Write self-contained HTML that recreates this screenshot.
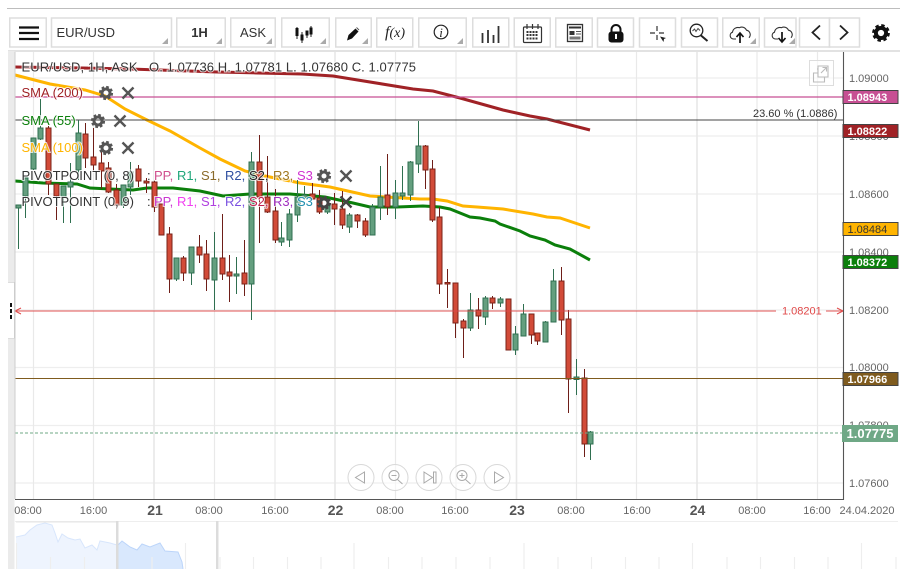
<!DOCTYPE html>
<html><head><meta charset="utf-8"><title>EUR/USD</title>
<style>
html,body{margin:0;padding:0;background:#fff;width:905px;height:569px;overflow:hidden}
svg{display:block;filter:blur(.35px)}
text{font-family:"Liberation Sans",sans-serif}
.ax{font-size:11px;fill:#666}
.d{font-size:14px;font-weight:bold;fill:#555;text-anchor:middle}
.t{font-size:11px;fill:#666;text-anchor:middle}
.l{font-size:13px;paint-order:stroke;stroke:#fff;stroke-width:2px;stroke-opacity:.75}
.v{font-size:11px;font-weight:bold;fill:#fff}
.b{fill:#fff;stroke:#ddd;stroke-width:1.5}
.c{fill:#aaa}
</style></head><body>
<svg xmlns="http://www.w3.org/2000/svg" width="905" height="569" viewBox="0 0 905 569">
<defs>
<g id="gear"><circle r="4" fill="none" stroke="currentColor" stroke-width="3"/><circle r="6" fill="none" stroke="currentColor" stroke-width="2.2" stroke-dasharray="2.7 2.01"/></g>
<g id="xx"><path d="M-5.5-5.5L5.5 5.5M5.5-5.5L-5.5 5.5" stroke="currentColor" stroke-width="2.4" fill="none"/></g>
</defs>

<!-- top rule -->
<rect x="7" y="8" width="893" height="1" fill="#bdbdbd"/>

<!-- toolbar buttons -->
<rect class="b" x="9.75" y="18" width="36.5" height="29"/>
<rect class="b" x="51.5" y="18" width="120" height="29"/>
<rect class="b" x="176.75" y="18" width="48.5" height="29"/>
<rect class="b" x="230.75" y="18" width="44.5" height="29"/>
<rect class="b" x="281.75" y="18" width="47.5" height="29"/>
<rect class="b" x="335.75" y="18" width="35.5" height="29"/>
<rect class="b" x="376.75" y="18" width="36" height="29"/>
<rect class="b" x="418.75" y="18" width="47.5" height="29"/>
<rect class="b" x="472.75" y="18" width="36" height="29"/>
<rect class="b" x="514.25" y="18" width="36" height="29"/>
<rect class="b" x="555.75" y="18" width="36.5" height="29"/>
<rect class="b" x="597.5" y="18" width="36" height="29"/>
<rect class="b" x="639.5" y="18" width="36" height="29"/>
<rect class="b" x="681.5" y="18" width="36" height="29"/>
<rect class="b" x="722.75" y="18" width="36.5" height="29"/>
<rect class="b" x="764.5" y="18" width="31.5" height="29"/>
<rect class="b" x="799.5" y="18" width="30" height="29"/>
<rect class="b" x="829.5" y="18" width="30" height="29"/>

<!-- corner triangles -->
<path class="c" d="M168 38v6h-6zM222 38v6h-6zM272 38v6h-6zM326 38v6h-6zM368 38v6h-6zM463 38v6h-6zM756 38v6h-6zM795 38v6h-6z"/>

<!-- toolbar icons -->
<path d="M19 27.5h20M19 33h20M19 39h20" stroke="#111" stroke-width="2.2" fill="none"/>
<text x="56.5" y="37" font-size="13" fill="#333">EUR/USD</text>
<text x="199.5" y="37" font-size="13" font-weight="bold" fill="#333" text-anchor="middle">1H</text>
<text x="253" y="37" font-size="13" fill="#333" text-anchor="middle">ASK</text>
<path d="M297 27v12M302 32v11M307 31v7M311 26v11" stroke="#222" stroke-width="1" fill="none"/>
<path d="M296 28.5h2v7h-2zM301 35h2v5h-2zM306 31h2v4h-2zM310 28h2v6h-2z" fill="#111" stroke="#111"/>
<path d="M347 40.500l1.500-5.500 7-6.500 3 3-6.500 7z" fill="#111"/><path d="M356.500 27.500l2.500 2.500" stroke="#555" stroke-width="1"/>
<text x="395" y="37" font-size="14" fill="#222" text-anchor="middle" style="font-family:'Liberation Serif',serif;font-style:italic"><tspan font-size="16">f</tspan>(x)</text>
<circle cx="441" cy="32" r="6.8" fill="none" stroke="#222" stroke-width="1.2"/>
<text x="441" y="37" font-size="13" fill="#222" text-anchor="middle" style="font-family:'Liberation Serif',serif;font-style:italic">i</text>
<path d="M482.5 33v10M488 30v13M493.5 35v8M498.5 26v17" stroke="#333" stroke-width="1.8" fill="none"/>
<rect x="523.5" y="27" width="18" height="15.5" rx="1" fill="none" stroke="#333" stroke-width="1.2"/>
<path d="M527 24v5M532.5 24v5M538 24v5" stroke="#333" stroke-width="1.2"/>
<path d="M526.5 32h12M526.5 35h12M526.5 38.5h12" stroke="#333" stroke-width="2" stroke-dasharray="2 1" fill="none"/>
<rect x="567.5" y="24.5" width="15" height="17" fill="none" stroke="#333" stroke-width="1.3"/>
<path d="M569 27.5h12" stroke="#333" stroke-width="2"/>
<rect x="569.5" y="31" width="5" height="4" fill="#333"/><rect x="569.5" y="36.5" width="11" height="3" fill="#777"/><path d="M576 31.5h5M576 34h5" stroke="#555"/>
<path d="M611.5 32v-2.5a4.5 4.5 0 0 1 9 0V32" fill="none" stroke="#111" stroke-width="2"/>
<rect x="608.5" y="31.5" width="15" height="11" rx="3" fill="#111"/><rect x="615" y="34" width="2" height="5" fill="#fff"/>
<path d="M650 33h5M659 33h5M657 26v5M657 35v5" stroke="#333" stroke-width="1.2"/>
<path d="M660 36.5l6 1.5-2 1 -.5 3z" fill="#222"/>
<circle cx="696.5" cy="30.5" r="6.3" fill="none" stroke="#222" stroke-width="1.3"/>
<path d="M701 35.5l6.5 5.5" stroke="#222" stroke-width="2"/>
<path d="M692.5 31l2-2 1.5 2.5 2-3 2 2" fill="none" stroke="#444"/>
<path d="M736 39h-2.5a3.5 3.5 0 0 1-1-6.8 5.5 5.5 0 0 1 7-4.5 5 5 0 0 1 7 2.5 4.5 4.5 0 0 1 2.5 7.5" fill="none" stroke="#333" stroke-width="1.1"/>
<path d="M740 43v-9M736.5 37l3.5-4 3.5 4" fill="none" stroke="#111" stroke-width="1.7"/>
<path d="M778 39h-2.5a3.5 3.5 0 0 1-1-6.8 5.5 5.5 0 0 1 7-4.5 5 5 0 0 1 7 2.5 4.5 4.5 0 0 1 2.5 7.5" fill="none" stroke="#333" stroke-width="1.1"/>
<path d="M782 32v9M778.5 38l3.5 4 3.5-4" fill="none" stroke="#111" stroke-width="1.7"/>
<path d="M820 25.5l-7.5 7 7.5 7" fill="none" stroke="#222" stroke-width="1.8"/>
<path d="M840 25.5l7.5 7-7.5 7" fill="none" stroke="#222" stroke-width="1.8"/>
<g transform="translate(881 33) scale(1.25)" style="color:#111"><use href="#gear"/><circle r="4.500" fill="none" stroke="#111" stroke-width="2.200"/></g>

<!-- chart frame / left strip -->
<rect x="8" y="50" width="892" height="2" fill="#e2e2e2"/>
<rect x="8" y="51" width="6.5" height="231" fill="#ebebeb"/>
<rect x="8" y="282" width="7" height="56" fill="#fff"/>
<rect x="8" y="282" width="7" height="1" fill="#ddd"/><rect x="8" y="338" width="7" height="1" fill="#ddd"/>
<rect x="14" y="282" width="1" height="56" fill="#ccc"/>
<rect x="8" y="339" width="6.5" height="230" fill="#ebebeb"/>
<path d="M11 303v4M11 309v4M11 315v4" stroke="#111" stroke-width="2"/>

<!-- grid -->
<path d="M15 78h828M15 136h828M15 194h828M15 252h828M15 310h828M15 367.5h828M15 425.5h828M15 483h828" stroke="#eee" stroke-width="1.3"/>
<path d="M33.5 52v447M93.5 52v447M214.5 52v447M275 52v447M395.5 52v447M456 52v447M576.5 52v447M636.5 52v447M757 52v447M817.5 52v447" stroke="#e9e9e9" stroke-width="1.2"/>
<path d="M154 52v447M335 52v447M516.5 52v447M697 52v447" stroke="#e8e8e8" stroke-width="1.6"/>

<!-- SMAs -->
<path d="M15 75L50 84 85 90 105 96 125 109 147 120 170 131 200 148 220 159 245 171 265 176 300 183 330 187 370 196 420 199 433 199 447 201 463 206 477 207 503 209 533 214 547 217 560 218 590 228" fill="none" stroke="#ffb400" stroke-width="3"/>
<path d="M15 181L43 183 77 184 90 188 110 189 133 190 147 188 173 188 200 191 223 196 250 194 290 194 325 197 353 203 370 207 397 207 423 206 440 207 450 209 465 215 470 217 480 218 495 221 500 224 520 231 530 236 545 240 555 245 570 249 590 260" fill="none" stroke="#0b7f0b" stroke-width="3"/>
<path d="M15 67L83 68 130 69 217 72 302 74 333 76 413 89 433 91 460 98 503 110 530 116 547 119 590 130" fill="none" stroke="#a02226" stroke-width="3"/>

<!-- h lines -->
<path d="M15 97h828" stroke="#c74f93" stroke-width="1.2"/>
<path d="M15 120h828" stroke="#444" stroke-width="1"/>

<!-- green wicks -->
<path fill="none" stroke="#2f6f50" stroke-width="1" d="M18.5 205V249M25.5 178V218M33.5 138V170M40.5 99V140M63.5 186V223M70.5 163V223M78.5 120V180M123.5 185V208M130.5 162V195M176.5 258V281M191.5 247V285M214.5 232V310M236.5 257V294M251.5 152V320M281.5 222V246M289.5 209V247M297.5 180V222M304.5 186V200M327.5 200V214M349.5 213V233M372.5 204V235M380.5 166V220M395.5 180V219M402.5 166V200M410.5 161V201M418.5 121V173M470.5 293V331M485.5 296V325M500.5 297V307M515.5 326V355M523.5 304V336M545.5 321V342M553.5 269V322M576.5 359V395M590.5 431V460"/>
<!-- red wicks -->
<path fill="none" stroke="#6e1e18" stroke-width="1" d="M48.5 126V195M56.5 184V220M85.5 123V168M93.5 128V172M101.5 145V189M108.5 162V193M116.5 184V209M138.5 165V187M146.5 178V193M154.5 180V212M161.5 204V235M169.5 227V293M183.5 256V281M199.5 235V263M206.5 240V291M222.5 214V280M229.5 255V302M244.5 240V296M259.5 135V243M267.5 156V213M275.5 189V243M312.5 183V200M319.5 190V214M334.5 193V225M342.5 191V229M357.5 214V228M365.5 218V237M387.5 154V215M425.5 145V189M432.5 160V222M439.5 207V294M447.5 269V308M455.5 283V338M463.5 319V358M478.5 298V329M492.5 296V309M508.5 299V350M531.5 314V344M537.5 333V345M561.5 267V335M568.5 310V413M584.5 369V457"/>
<!-- green bodies -->
<path fill="#649f7f" stroke="#2f6f50" stroke-width="1" d="M16 205h5v3h-5zM23 178h5v18h-5zM31 138h5v31h-5zM38 128h5v11h-5zM61 186h5v11h-5zM68 182h5v5h-5zM76 133h5v37h-5zM121 185h5v20h-5zM128 172h5v15h-5zM174 258h5v21h-5zM189 247h5v26h-5zM212 258h5v22h-5zM234 274h5v2h-5zM249 162h5v122h-5zM279 238h5v4h-5zM287 214h5v26h-5zM295 197h5v18h-5zM302 195h5v3h-5zM325 206h5v6h-5zM347 215h5v12h-5zM370 207h5v28h-5zM378 197h5v10h-5zM393 193h5v14h-5zM400 193h5v3h-5zM408 162h5v33h-5zM416 146h5v18h-5zM468 310h5v18h-5zM483 298h5v19h-5zM498 299h5v4h-5zM513 334h5v16h-5zM521 314h5v22h-5zM543 322h5v20h-5zM551 281h5v41h-5zM574 377h5v2.500h-5zM588 432h5v12h-5z"/>
<!-- red bodies -->
<path fill="#d24b38" stroke="#7a2319" stroke-width="1" d="M46 128h5v56h-5zM54 184h5v12h-5zM83 134h5v24h-5zM91 157h5v8h-5zM99 163h5v8h-5zM106 168h5v24h-5zM114 190h5v15h-5zM136 169h5v12h-5zM144 181h5v2h-5zM152 182h5v25h-5zM159 204h5v31h-5zM167 234h5v45h-5zM181 258h5v15h-5zM197 247h5v8h-5zM204 254h5v25h-5zM220 258h5v16h-5zM227 272h5v4h-5zM242 273h5v11h-5zM257 162h5v35h-5zM265 197h5v15h-5zM273 211h5v29h-5zM310 194h5v5h-5zM317 198h5v14h-5zM332 204h5v5h-5zM340 209h5v16h-5zM355 215h5v6h-5zM363 221h5v14h-5zM385 195h5v12h-5zM423 146h5v24h-5zM430 169h5v51h-5zM437 217h5v67h-5zM445 282.500h5v1.500h-5zM453 283h5v40h-5zM461 321h5v7h-5zM476 310h5v6h-5zM490 298h5v5h-5zM506 299h5v51h-5zM529 314h5v21h-5zM535 333h5v8h-5zM559 281h5v39h-5zM566 319h5v60h-5zM582 378h5v66h-5z"/>

<!-- lines on top of candles -->
<path d="M15 311h761M826 311h17" stroke="#e04848" stroke-width="1.2" opacity=".75"/>
<path d="M21 308l-6 3 6 3M837 308l6 3-6 3" fill="none" stroke="#e04848" stroke-width="1"/>
<path d="M15 378.500h828" stroke="#7f5b1e" stroke-width="1.1"/>
<path d="M15 433h828" stroke="#6fa886" stroke-width="1" stroke-dasharray="3 2"/>

<!-- axis -->
<path d="M843.500 52V499.500H15" fill="none" stroke="#555" stroke-width="1.1"/>
<path d="M15 52v447" stroke="#ccc" stroke-width="1"/>

<!-- price labels -->
<text class="ax" x="849" y="82">1.09000</text>
<text class="ax" x="849" y="140">1.08800</text>
<text class="ax" x="849" y="198">1.08600</text>
<text class="ax" x="849" y="256">1.08400</text>
<text class="ax" x="849" y="314">1.08200</text>
<text class="ax" x="849" y="371">1.08000</text>
<text class="ax" x="849" y="429">1.07800</text>
<text class="ax" x="849" y="487">1.07600</text>

<rect x="843" y="90.500" width="55" height="13" fill="#c74f93" stroke="#444"/><text class="v" x="847.500" y="101">1.08943</text>
<rect x="843" y="124.500" width="55" height="13" fill="#a02226" stroke="#444"/><text class="v" x="847.500" y="135">1.08822</text>
<rect x="843" y="222.500" width="55" height="13" fill="#ffb400" stroke="#444"/><text x="847.500" y="233" font-size="11" fill="#333">1.08484</text>
<rect x="843" y="255.500" width="55" height="13" fill="#0b7f0b" stroke="#444"/><text class="v" x="847.500" y="266">1.08372</text>
<rect x="843" y="372.500" width="55" height="13" fill="#7f5b1e" stroke="#444"/><text class="v" x="847.500" y="383">1.07966</text>
<rect x="842" y="425" width="56" height="17" fill="#6fa886"/><text x="846.500" y="438" font-size="13" font-weight="bold" fill="#fff">1.07775</text>

<text x="782" y="314.500" font-size="11" fill="#e04848">1.08201</text>
<text x="753" y="117" font-size="11" fill="#333">23.60 % (1.0886)</text>

<!-- popout icon -->
<rect x="809.500" y="60.500" width="24" height="25" fill="#fff" fill-opacity=".6" stroke="#ddd" stroke-width="1"/>
<path d="M818 73h-4.500v9h11v-5M818 70v-1h-1M818 70v7h10v-11h-10v3M821 73l5-5M822.500 67.500h4v4" fill="none" stroke="#bbb" stroke-width="1.100"/>

<!-- legend -->
<text class="l" x="21.500" y="71.500" fill="#333" textLength="116">EUR/USD, 1H, ASK</text>
<text class="l" x="149" y="71.500" fill="#333" textLength="267">O. 1.07736 H. 1.07781 L. 1.07680 C. 1.07775</text>
<text class="l" x="21.500" y="97" fill="#a02226">SMA (200)</text>
<text class="l" x="21.500" y="125" fill="#0b7f0b">SMA (55)</text>
<text class="l" x="21.500" y="152" fill="#ffb400">SMA (100)</text>
<use href="#gear" x="106" y="93" style="color:#555"/><use href="#xx" x="128" y="93" style="color:#555"/>
<use href="#gear" x="98" y="121" style="color:#555"/><use href="#xx" x="120" y="121" style="color:#555"/>
<use href="#gear" x="106" y="148" style="color:#555"/><use href="#xx" x="128" y="148" style="color:#555"/>

<text class="l" x="21.500" y="180" fill="#333">PIVOTPOINT (0, 8)</text>
<text class="l" x="147" y="180" fill="#333">:</text>
<text class="l" x="154" y="180" fill="#d0508e">PP,</text>
<text class="l" x="177" y="180" fill="#1fa67a">R1,</text>
<text class="l" x="201" y="180" fill="#8a6a2a">S1,</text>
<text class="l" x="225" y="180" fill="#2f4fa0">R2,</text>
<text class="l" x="249" y="180" fill="#222">S2,</text>
<text class="l" x="273" y="180" fill="#a07820">R3,</text>
<text class="l" x="297" y="180" fill="#d030d0">S3</text>
<use href="#gear" x="324" y="176" style="color:#555"/><use href="#xx" x="346" y="176" style="color:#555"/>

<text class="l" x="21.500" y="206" fill="#333">PIVOTPOINT (0, 9)</text>
<text class="l" x="147" y="206" fill="#333">:</text>
<text class="l" x="154" y="206" fill="#c838d0">PP,</text>
<text class="l" x="177" y="206" fill="#f040f0">R1,</text>
<text class="l" x="201" y="206" fill="#b040e0">S1,</text>
<text class="l" x="225" y="206" fill="#7a50e0">R2,</text>
<text class="l" x="249" y="206" fill="#c02050">S2,</text>
<text class="l" x="273" y="206" fill="#a030c0">R3,</text>
<text class="l" x="297" y="206" fill="#2090b0">S3</text>
<use href="#gear" x="324" y="203" style="color:#444"/><use href="#xx" x="346" y="202" style="color:#444"/>

<!-- chart nav buttons -->
<g fill="#fff" fill-opacity=".55" stroke="#d8d8d8" stroke-width="1">
<circle cx="361" cy="477.500" r="13"/><circle cx="395" cy="477.500" r="13"/><circle cx="429" cy="477.500" r="13"/><circle cx="463" cy="477.500" r="13"/><circle cx="497" cy="477.500" r="13"/>
</g>
<g fill="none" stroke="#aaa" stroke-width="1">
<path d="M364.500 472v11l-9-5.500z"/>
<circle cx="394" cy="475.500" r="5"/><path d="M397.500 479.500l5 4.500M391.500 475.500h5"/>
<path d="M424 472v11l8.500-5.500zM433.500 472v11h2.500v-11z"/>
<circle cx="462" cy="475.500" r="5"/><path d="M465.500 479.500l5 4.500M459.500 475.500h5M462 473v5"/>
<path d="M494.500 472v11l9-5.500z"/>
</g>

<!-- time axis -->
<text class="t" x="28" y="514">08:00</text>
<text class="t" x="93.500" y="514">16:00</text>
<text class="d" x="155" y="515">21</text>
<text class="t" x="209" y="514">08:00</text>
<text class="t" x="275" y="514">16:00</text>
<text class="d" x="335.500" y="515">22</text>
<text class="t" x="390" y="514">08:00</text>
<text class="t" x="455" y="514">16:00</text>
<text class="d" x="517" y="515">23</text>
<text class="t" x="571" y="514">08:00</text>
<text class="t" x="637" y="514">16:00</text>
<text class="d" x="697.500" y="515">24</text>
<text class="t" x="752" y="514">08:00</text>
<text class="t" x="817" y="514">16:00</text>
<text class="t" x="867" y="514">24.04.2020</text>

<!-- navigator -->
<path d="M15 521.500h883" stroke="#eee" stroke-width="1"/>
<path d="M16 569V537L25 535 30 530 37 525 45 523 52 525 55 533 58 542 62 534 68 538 75 540 80 539 85 548 92 545 97 550 100 541 110 543 117 545V569z" fill="#eef4fe" stroke="none"/>
<path d="M16 537L25 535 30 530 37 525 45 523 52 525 55 533 58 542 62 534 68 538 75 540 80 539 85 548 92 545 97 550 100 541 110 543 117 545" fill="none" stroke="#d8e6fc"/>
<path d="M118 569V545L122 541 130 547 137 550 142 544 150 547 160 543 165 551 178 552 182 562 183 569z" fill="#d9e8fd"/>
<path d="M118 545L122 541 130 547 137 550 142 544 150 547 160 543 165 551 178 552 182 562 183 569" fill="none" stroke="#bcd5fa"/>
<path d="M16 522h101" stroke="#e4e4e4"/>
<path d="M16.500 543v26M185.500 543v26M354 543v26M524 543v26M692.500 543v26M861.500 543v26" stroke="#eee" stroke-width="1.200"/>
<path d="M50.500 557v12M84.500 557v12M152 557v12M220 557v12M253.500 557v12M287.500 557v12M321 557v12M388.500 557v12M422 557v12M456 557v12M490 557v12M558 557v12M591.500 557v12M625.500 557v12M659 557v12M727 557v12M760.500 557v12M794.500 557v12M828 557v12M896 557v12" stroke="#eee" stroke-width="1.200"/>
<rect x="116" y="521" width="2.500" height="48" fill="#dcdcdc"/>
<rect x="216" y="521" width="2.500" height="48" fill="#dcdcdc"/>
</svg>
</body></html>
